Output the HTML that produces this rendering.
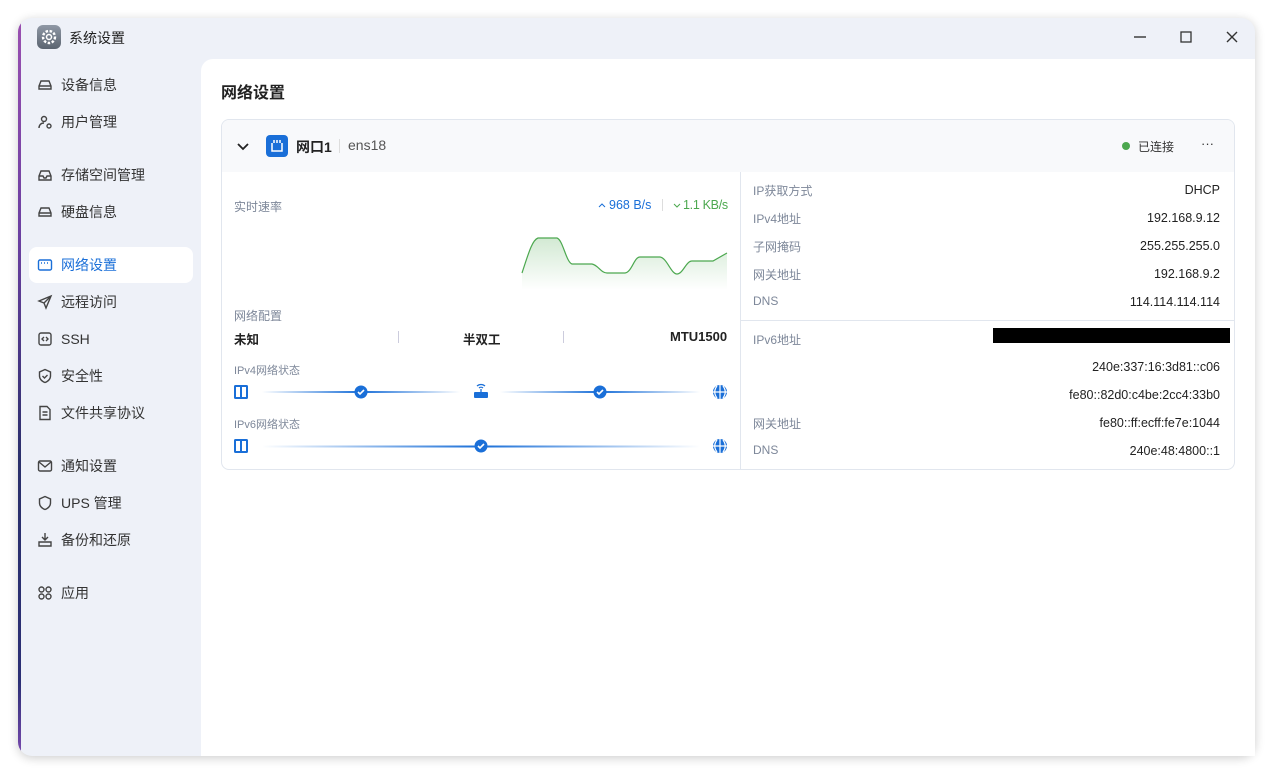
<!DOCTYPE html><html><head><meta charset="utf-8"><style>
*{box-sizing:border-box;margin:0;padding:0}
body{width:1273px;height:774px;background:#fff;font-family:"Liberation Sans","Noto Sans CJK SC",sans-serif;position:relative;overflow:hidden;color:#222}
.win{position:absolute;left:18px;top:18px;width:1237px;height:738px;border-radius:14px;background:#eef1f8;box-shadow:0 2px 10px rgba(0,0,0,.2);overflow:hidden}
.strip{position:absolute;left:0;top:0;width:3px;height:100%;background:linear-gradient(#9a4fb0,#6a3fa0 30%,#2a2f6a 60%,#2b2f75 90%,#7a4ab0)}
.a{position:absolute;white-space:nowrap}
.nav{position:absolute;left:37px;font-size:14px;color:#333;display:flex;align-items:center;height:20px}
.nav svg{width:16px;height:16px;margin-right:8px;fill:none;stroke:#444;stroke-width:1.4}
.main{position:absolute;left:201px;top:59px;width:1054px;height:697px;background:#fff;border-top-left-radius:12px}
.lbl{position:absolute;font-size:12px;color:#7d8799}
.val{position:absolute;font-size:12.5px;color:#222;right:53px;text-align:right;margin-top:1px}
</style></head><body>
<div class="win"><div class="strip"></div></div>
<div class="a" style="left:37px;top:25px;width:24px;height:24px;border-radius:6px;background:linear-gradient(#8f98a5,#5b6470)"><svg width="24" height="24" viewBox="0 0 24 24"><circle cx="12" cy="12" r="6" fill="none" stroke="#fff" stroke-width="2.4" stroke-dasharray="2.5 1.6"/><circle cx="12" cy="12" r="2.5" fill="none" stroke="#fff" stroke-width="1.5"/></svg></div>
<div class="a" style="left:69px;top:28px;font-size:14px;color:#222">系统设置</div>
<svg class="a" style="left:1133px;top:30px" width="14" height="14"><path d="M1 7h12" stroke="#333" stroke-width="1.4"/></svg>
<svg class="a" style="left:1179px;top:30px" width="14" height="14"><rect x="2" y="2" width="10" height="10" fill="none" stroke="#333" stroke-width="1.3"/></svg>
<svg class="a" style="left:1225px;top:30px" width="14" height="14"><path d="M2 2l10 10M12 2L2 12" stroke="#333" stroke-width="1.4"/></svg>

<div class="a" style="left:29px;top:247px;width:164px;height:36px;background:#fff;border-radius:8px"></div>
<div class="nav" style="top:75px"><svg viewBox="0 0 16 16"><path d="M2 9l2-5h8l2 5v3H2z M2 9h12"/></svg>设备信息</div>
<div class="nav" style="top:112px"><svg viewBox="0 0 16 16"><circle cx="7" cy="5" r="2.5"/><path d="M2 14c0-3 2-5 5-5"/><circle cx="12" cy="12" r="2"/></svg>用户管理</div>
<div class="nav" style="top:165px"><svg viewBox="0 0 16 16"><path d="M2 9l2-5h8l2 5v4H2z M2 9h4l1 2h2l1-2h4"/></svg>存储空间管理</div>
<div class="nav" style="top:202px"><svg viewBox="0 0 16 16"><path d="M2 9l2-5h8l2 5v3H2z M2 9h12"/></svg>硬盘信息</div>
<div class="nav" style="top:255px;color:#1a6fd8"><svg viewBox="0 0 16 16" style="stroke:#1a6fd8"><rect x="1.5" y="3" width="13" height="10" rx="1.5"/><path d="M4 6h1M7 6h1M10 6h1"/></svg>网络设置</div>
<div class="nav" style="top:292px"><svg viewBox="0 0 16 16"><path d="M14 2L2 7l5 2 2 5z M7 9l7-7"/></svg>远程访问</div>
<div class="nav" style="top:329px"><svg viewBox="0 0 16 16"><rect x="2" y="2" width="12" height="12" rx="2"/><path d="M7 6L5 8l2 2M9 6l2 2-2 2"/></svg>SSH</div>
<div class="nav" style="top:366px"><svg viewBox="0 0 16 16"><path d="M8 1.5l5.5 2.5v4c0 3-2.5 5.5-5.5 6.5C5 13.5 2.5 11 2.5 8V4z M5.5 8l2 2 3-3"/></svg>安全性</div>
<div class="nav" style="top:403px"><svg viewBox="0 0 16 16"><path d="M3 1.5h7l3 3v10H3z M5.5 7h5M5.5 10h5"/></svg>文件共享协议</div>
<div class="nav" style="top:456px"><svg viewBox="0 0 16 16"><rect x="1.5" y="3" width="13" height="10" rx="1.5"/><path d="M2 4l6 5 6-5"/></svg>通知设置</div>
<div class="nav" style="top:493px"><svg viewBox="0 0 16 16"><path d="M8 1.5l5.5 2.5v4c0 3-2.5 5.5-5.5 6.5C5 13.5 2.5 11 2.5 8V4z"/></svg>UPS 管理</div>
<div class="nav" style="top:530px"><svg viewBox="0 0 16 16"><path d="M8 1v7M5 5l3 3 3-3M2 10h12v4H2z"/></svg>备份和还原</div>
<div class="nav" style="top:583px"><svg viewBox="0 0 16 16"><circle cx="4.5" cy="4.5" r="2.5"/><circle cx="11.5" cy="4.5" r="2.5"/><circle cx="4.5" cy="11.5" r="2.5"/><circle cx="11.5" cy="11.5" r="2.5"/></svg>应用</div>

<div class="main"></div>
<div class="a" style="left:221px;top:79px;font-size:16px;font-weight:bold;color:#222">网络设置</div>

<div class="a" style="left:221px;top:119px;width:1014px;height:351px;border:1px solid #e1e6ee;border-radius:8px;overflow:hidden">
 <div style="position:absolute;left:0;top:0;width:100%;height:52px;background:#f8f9fb"></div>
 <div style="position:absolute;left:518px;top:52px;width:1px;height:298px;background:#e1e6ee"></div>
 <div style="position:absolute;left:519px;top:200px;width:494px;height:1px;background:#e1e6ee"></div>
</div>
<svg class="a" style="left:236px;top:139px" width="14" height="14"><path d="M2 5l5 5 5-5" fill="none" stroke="#222" stroke-width="1.8"/></svg>
<div class="a" style="left:266px;top:135px;width:22px;height:22px;border-radius:4px;background:#1a6fd8"><svg width="22" height="22"><path d="M6 8v8h10V8M8 8V5M11 8V5M14 8V5" fill="none" stroke="#fff" stroke-width="1.5"/></svg></div>
<div class="a" style="left:296px;top:137px;font-size:14px;font-weight:bold;color:#222">网口1</div>
<div class="a" style="left:339px;top:139px;width:1px;height:14px;background:#ddd"></div>
<div class="a" style="left:348px;top:137px;font-size:14px;color:#555">ens18</div>
<div class="a" style="left:1122px;top:142px;width:8px;height:8px;border-radius:50%;background:#4ca84f"></div>
<div class="a" style="left:1138px;top:138px;font-size:12px;color:#333">已连接</div>
<div class="a" style="left:1201px;top:136px;font-size:13px;color:#333">···</div>

<div class="lbl" style="left:234px;top:198px">实时速率</div>
<svg class="a" style="left:598px;top:202px" width="8" height="6"><path d="M1 5l3-3 3 3" fill="none" stroke="#1a6fd8" stroke-width="1"/></svg>
<div class="a" style="left:609px;top:198px;font-size:12.5px;color:#1a6fd8">968 B/s</div>
<div class="a" style="left:662px;top:199px;width:1px;height:12px;background:#ddd"></div>
<svg class="a" style="left:673px;top:203px" width="8" height="6"><path d="M1 1l3 3 3-3" fill="none" stroke="#4ca84f" stroke-width="1"/></svg>
<div class="a" style="left:683px;top:198px;font-size:12.5px;color:#4ca84f;letter-spacing:-.3px">1.1 KB/s</div>
<svg class="a" style="left:0;top:0" width="740" height="300"><defs><linearGradient id="g" x1="0" y1="0" x2="0" y2="1"><stop offset="0" stop-color="#4ca84f" stop-opacity=".25"/><stop offset="1" stop-color="#4ca84f" stop-opacity="0"/></linearGradient></defs>
<path d="M522 273C528 255 532 240 538 238L557 238C563 240 566 262 572 264L592 264C598 265 601 273 607 273L625 273C632 272 634 257 640 257L660 257C667 258 671 274 677 274C683 274 686 261 692 261L713 261L727 253L727 290L522 290Z" fill="url(#g)"/>
<path d="M522 273C528 255 532 240 538 238L557 238C563 240 566 262 572 264L592 264C598 265 601 273 607 273L625 273C632 272 634 257 640 257L660 257C667 258 671 274 677 274C683 274 686 261 692 261L713 261L727 253" fill="none" stroke="#4ca84f" stroke-width="1.2"/></svg>

<div class="lbl" style="left:234px;top:307px">网络配置</div>
<div class="a" style="left:234px;top:329px;font-size:12.5px;font-weight:bold">未知</div>
<div class="a" style="left:398px;top:331px;width:1px;height:12px;background:#ccd"></div>
<div class="a" style="left:463px;top:329px;font-size:12.5px;font-weight:bold">半双工</div>
<div class="a" style="left:563px;top:331px;width:1px;height:12px;background:#ccd"></div>
<div class="a" style="left:670px;top:329px;font-size:13px;font-weight:bold">MTU1500</div>

<div class="lbl" style="left:234px;top:362px;font-size:11px">IPv4网络状态</div>
<div class="lbl" style="left:234px;top:416px;font-size:11px">IPv6网络状态</div>
<svg class="a" style="left:0;top:0" width="740" height="470"><defs>
<linearGradient id="l1" x1="0" x2="1"><stop offset="0" stop-color="#1a6fd8" stop-opacity="0"/><stop offset=".5" stop-color="#1a6fd8"/><stop offset="1" stop-color="#1a6fd8" stop-opacity="0"/></linearGradient>
<g id="chk"><circle r="6.5" fill="#1a6fd8"/><path d="M-3 0l2 2 4-4" fill="none" stroke="#fff" stroke-width="1.6"/></g>
<g id="srv"><rect x="-7" y="-7" width="14" height="14" rx="1.5" fill="#1a6fd8"/><rect x="-5" y="-5" width="4" height="10" fill="#fff"/><rect x="1" y="-5" width="4" height="10" fill="#fff"/></g>
<g id="glb"><circle r="7" fill="#1a6fd8"/><path d="M-7 0h14M0-7v14M-3-6c-3 4-3 8 0 12M3-6c3 4 3 8 0 12" fill="none" stroke="#fff" stroke-width="1.2"/></g></defs>
<rect x="262" y="391" width="198" height="2" fill="url(#l1)"/>
<rect x="500" y="391" width="200" height="2" fill="url(#l1)"/>
<rect x="262" y="445.5" width="438" height="2" fill="url(#l1)"/>
<use href="#srv" x="241" y="392"/><use href="#chk" x="361" y="392"/><use href="#chk" x="600" y="392"/><use href="#glb" x="720" y="392"/>
<g transform="translate(481 392)"><rect x="-7" y="0" width="14" height="6" rx="1" fill="#1a6fd8"/><path d="M0 0v-3M-4-6a6 6 0 0 1 8 0M-2-4a3 3 0 0 1 4 0" fill="none" stroke="#1a6fd8" stroke-width="1.3"/></g>
<use href="#srv" x="241" y="446"/><use href="#chk" x="481" y="446"/><use href="#glb" x="720" y="446"/>
</svg>

<div class="lbl" style="left:753px;top:182px">IP获取方式</div><div class="val" style="top:182px">DHCP</div>
<div class="lbl" style="left:753px;top:210px">IPv4地址</div><div class="val" style="top:210px">192.168.9.12</div>
<div class="lbl" style="left:753px;top:238px">子网掩码</div><div class="val" style="top:238px">255.255.255.0</div>
<div class="lbl" style="left:753px;top:266px">网关地址</div><div class="val" style="top:266px">192.168.9.2</div>
<div class="lbl" style="left:753px;top:294px">DNS</div><div class="val" style="top:294px">114.114.114.114</div>
<div class="lbl" style="left:753px;top:331px">IPv6地址</div>
<div class="a" style="left:993px;top:328px;width:237px;height:15px;background:#000"></div>
<div class="val" style="top:359px">240e:337:16:3d81::c06</div>
<div class="val" style="top:387px">fe80::82d0:c4be:2cc4:33b0</div>
<div class="lbl" style="left:753px;top:415px">网关地址</div><div class="val" style="top:415px">fe80::ff:ecff:fe7e:1044</div>
<div class="lbl" style="left:753px;top:443px">DNS</div><div class="val" style="top:443px">240e:48:4800::1</div>
</body></html>
